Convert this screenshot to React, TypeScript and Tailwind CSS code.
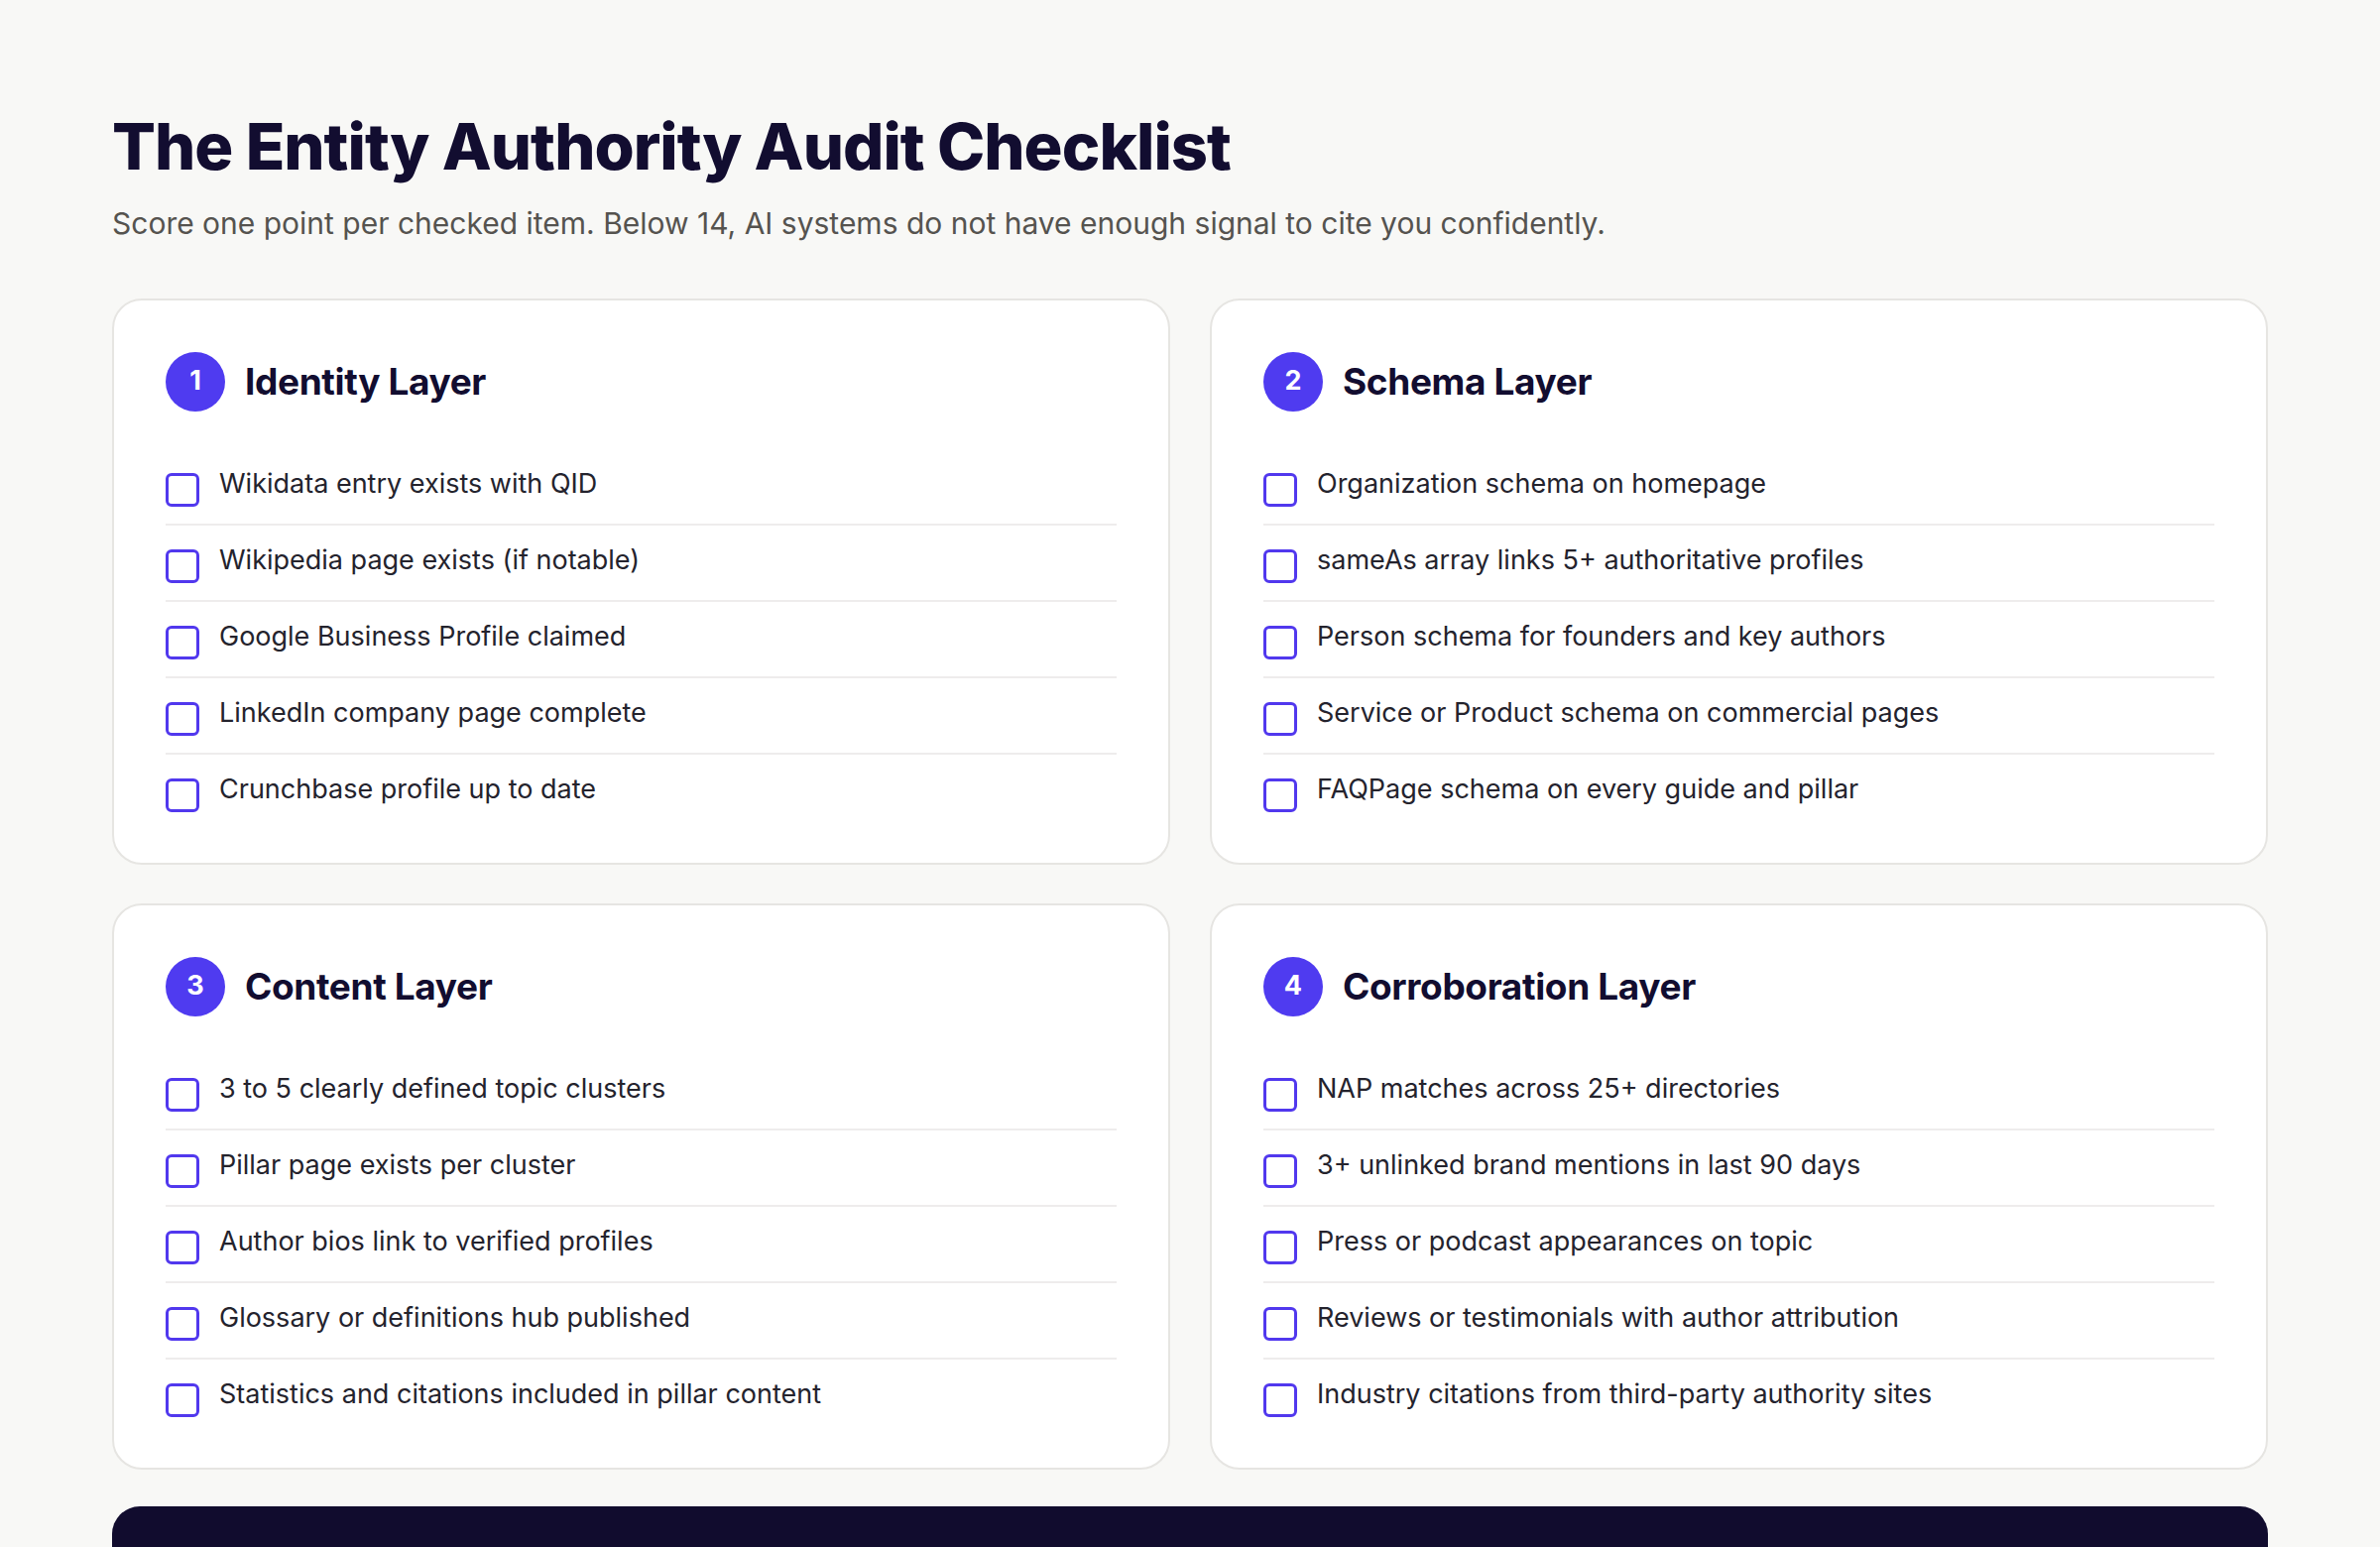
import React from "react";

const sections = [
  { n: 1, title: "Identity Layer", items: ["Wikidata entry exists with QID", "Wikipedia page exists (if notable)", "Google Business Profile claimed", "LinkedIn company page complete", "Crunchbase profile up to date"] },
  { n: 2, title: "Schema Layer", items: ["Organization schema on homepage", "sameAs array links 5+ authoritative profiles", "Person schema for founders and key authors", "Service or Product schema on commercial pages", "FAQPage schema on every guide and pillar"] },
  { n: 3, title: "Content Layer", items: ["3 to 5 clearly defined topic clusters", "Pillar page exists per cluster", "Author bios link to verified profiles", "Glossary or definitions hub published", "Statistics and citations included in pillar content"] },
  { n: 4, title: "Corroboration Layer", items: ["NAP matches across 25+ directories", "3+ unlinked brand mentions in last 90 days", "Press or podcast appearances on topic", "Reviews or testimonials with author attribution", "Industry citations from third-party authority sites"] },
];

export default function App() {
  return (
    <div className="min-h-[1560px] bg-[#f8f8f6] px-[113px] pt-[112px] pb-[60px]" style={{ fontFamily: "Inter, 'Noto Sans', sans-serif" }}>
      <h1 className="text-[65px] font-extrabold leading-[1.1] tracking-[-0.015em] text-[#120d30]">The Entity Authority Audit Checklist</h1>
      <p className="mt-[22px] text-[30px] leading-[1.3] text-[#55534f]">Score one point per checked item. Below 14, AI systems do not have enough signal to cite you confidently.</p>
      <div className="mt-[56px] grid grid-cols-2 gap-x-[40px] gap-y-[39px]">
        {sections.map((s) => (
          <div key={s.n} className="h-[571px] rounded-[30px] border-2 border-[#e6e5e2] bg-white px-[52px] pt-[52px]">
            <div className="flex items-center gap-[20px]">
              <div className="flex h-[60px] w-[60px] items-center justify-center rounded-full bg-[#4f3bf0] text-[27px] font-bold text-white">{s.n}</div>
              <h2 className="text-[37px] font-bold tracking-[-0.01em] text-[#120d30]">{s.title}</h2>
            </div>
            <ul className="mt-[38px]">
              {s.items.map((it, i) => (
                <li key={it} className={`flex items-start gap-[20px] py-[17px] ${i < s.items.length - 1 ? "border-b-2 border-[#eeecec]" : ""}`}>
                  <span className="mt-[7px] h-[34px] w-[34px] shrink-0 rounded-[6px] border-[3px] border-[#5138ee]"></span>
                  <span className="text-[27px] leading-[36px] text-[#24232d]">{it}</span>
                </li>
              ))}
            </ul>
          </div>
        ))}
      </div>
      <div className="mt-[37px] rounded-[28px] bg-[#110c2e] px-[44px] py-[34px] text-[27px] leading-[40px] text-white">
        <span className="font-bold text-[#2dd4bf]">The scoring threshold:</span> 16 or higher and AI systems treat you as a real, citable entity. Below 14 and you are mostly invisible to generative search, no matter how strong your content is.
      </div>
    </div>
  );
}
